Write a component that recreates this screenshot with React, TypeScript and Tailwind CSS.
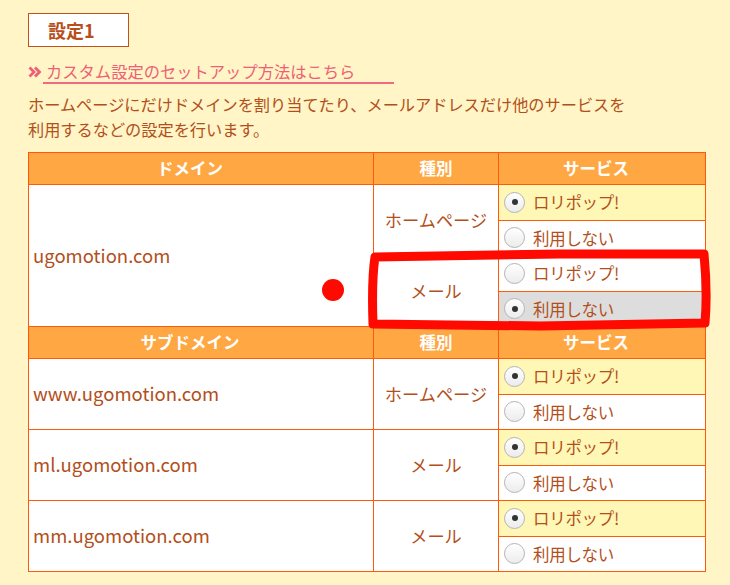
import React from 'react'

type Service = { label: string; checked: boolean }
type Row = { name: string; type: string; services: [Service, Service] }

const ff = "font-['Noto_Sans_CJK_JP','Noto_Sans',sans-serif]"

const pair = (lolipop: boolean): [Service, Service] => [
  { label: 'ロリポップ!', checked: lolipop },
  { label: '利用しない', checked: !lolipop },
]

function Radio({ checked }: { checked: boolean }) {
  return (
    <span className="flex h-[21px] w-[21px] shrink-0 items-center justify-center rounded-full border border-[#b4b4b4] bg-gradient-to-b from-white to-[#ececec]">
      {checked && <span className="h-[6px] w-[6px] rounded-full bg-[#333]" />}
    </span>
  )
}

function ServiceCell({ s }: { s: Service }) {
  const bg = s.checked ? (s.label === '利用しない' ? 'bg-[#dddddd]' : 'bg-[#fff7b6]') : 'bg-white'
  return (
    <td className={`border border-[#ff5a0a] p-0 ${bg}`}>
      <div className="flex items-center gap-[8px] pl-[5px] text-[16.5px] tracking-[-0.3px] text-[#b24f1b]">
        <Radio checked={s.checked} />
        <span className="leading-none">{s.label}</span>
      </div>
    </td>
  )
}

function Header({ first }: { first: string }) {
  return (
    <tr className="h-[32px] bg-[#ffa843]">
      <th className="border border-[#ff5a0a] pr-[22px] text-[16.5px] font-bold text-white">{first}</th>
      <th className="border border-[#ff5a0a] text-[16.5px] font-bold text-white">種別</th>
      <th className="border border-[#ff5a0a] pr-[12px] text-[16.5px] font-bold text-white">サービス</th>
    </tr>
  )
}

function Block({ name, rows }: { name: string; rows: { type: string; services: [Service, Service] }[] }) {
  return (
    <>
      {rows.map((r, i) => (
        <React.Fragment key={i}>
          <tr className="h-[35.5px]">
            {i === 0 && (
              <td rowSpan={rows.length * 2} className="border border-[#ff5a0a] bg-white pl-[4px] text-[18.5px] text-[#b24f1b]">
                {name}
              </td>
            )}
            <td rowSpan={2} className="border border-[#ff5a0a] bg-white text-center text-[17.2px] text-[#b24f1b]">
              {r.type}
            </td>
            <ServiceCell s={r.services[0]} />
          </tr>
          <tr className="h-[35.5px]">
            <ServiceCell s={r.services[1]} />
          </tr>
        </React.Fragment>
      ))}
    </>
  )
}

const subdomains: Row[] = [
  { name: 'www.ugomotion.com', type: 'ホームページ', services: pair(true) },
  { name: 'ml.ugomotion.com', type: 'メール', services: pair(true) },
  { name: 'mm.ugomotion.com', type: 'メール', services: pair(true) },
]

export default function App() {
  return (
    <div className={`relative h-[585px] w-[730px] overflow-hidden bg-[#fff5c6] pl-[28px] pt-[13px] ${ff}`}>
      <div className="flex h-[34px] w-[101px] items-center border-[1.5px] border-[#c4511b] bg-white pl-[19px] text-[18px] font-bold text-[#b84f1b]">
        設定1
      </div>

      <div className="mt-[15px] flex h-[22px] items-end">
        <svg width="14" height="14" viewBox="0 0 14 14" className="mb-[5px] mr-[1px] shrink-0">
          <path d="M1.5 2.5 L6 7 L1.5 11.5 M7 2.5 L11.5 7 L7 11.5" fill="none" stroke="#ef5f78" strokeWidth="2.8" />
        </svg>
        <a className="block w-[351px] border-b-2 border-[#f26a80] pl-[3px] text-[16.3px] leading-[22px] text-[#ef5f78]">
          カスタム設定のセットアップ方法はこちら
        </a>
      </div>

      <p className="mt-[8px] text-[16.2px] leading-[25px] text-[#b24f1b]">
        ホームページにだけドメインを割り当てたり、メールアドレスだけ他のサービスを
        <br />
        利用するなどの設定を行います。
      </p>

      <table className="mt-[10px] w-[677px] table-fixed border-collapse border border-[#ff5a0a]">
        <colgroup>
          <col className="w-[345px]" />
          <col className="w-[125px]" />
          <col className="w-[207px]" />
        </colgroup>
        <tbody>
          <Header first="ドメイン" />
          <Block
            name="ugomotion.com"
            rows={[
              { type: 'ホームページ', services: pair(true) },
              { type: 'メール', services: pair(false) },
            ]}
          />
          <Header first="サブドメイン" />
          {subdomains.map((r) => (
            <Block key={r.name} name={r.name} rows={[{ type: r.type, services: r.services }]} />
          ))}
        </tbody>
      </table>

      <svg className="pointer-events-none absolute left-0 top-0" width="730" height="585" viewBox="0 0 730 585">
        <circle cx="333" cy="290" r="11" fill="#ff0a00" />
        <path
          d="M375 257 C373 270 372 295 373 324 L540 326 L705 323 C707 300 706 275 704 254 L560 254 L375 257 Z"
          fill="none"
          stroke="#ff0a00"
          strokeWidth="9"
          strokeLinejoin="round"
        />
      </svg>
    </div>
  )
}
